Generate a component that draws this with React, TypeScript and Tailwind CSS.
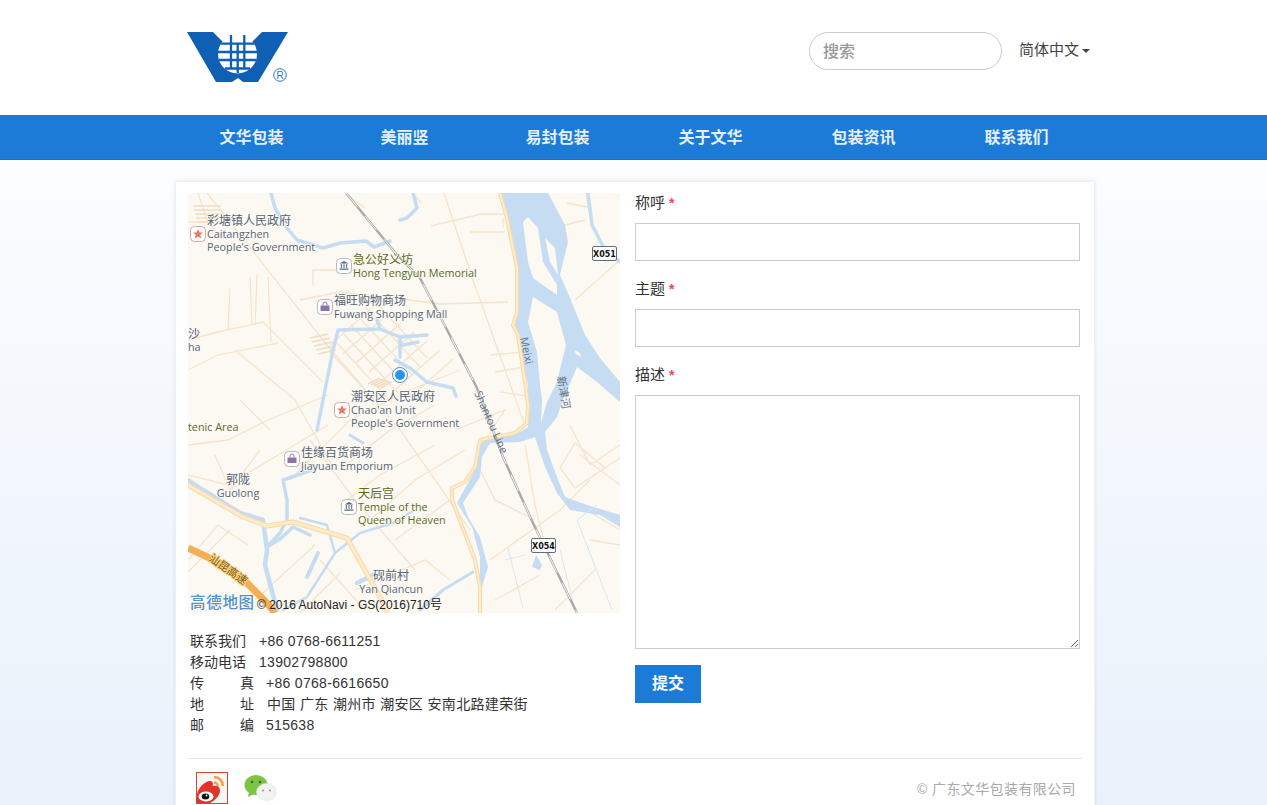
const cjk = '"Liberation Sans", "Noto Sans CJK SC", sans-serif';

const navItems = ['文华包装', '美丽竖', '易封包装', '关于文华', '包装资讯', '联系我们'];

function Logo() {
  return (
    <svg width="104" height="54" viewBox="0 0 104 54" className="block">
      <polygon points="0,0 26,0 36,10 65,10 75,0 101,0 71,50 56,50 51,46 45,50 29,50" fill="#0f5fb4" />
      <circle cx="50.500" cy="22" r="19.500" fill="#fff" />
      <g stroke="#0f5fb4" strokeWidth="2.300" fill="none">
        <path d="M34 11.700h33M31 20h39M32 28h37M38 36.500h25" />
        <path d="M44 3v34M57.300 3v34M50.700 12v29" />
      </g>
      <circle cx="93" cy="43" r="6.300" fill="none" stroke="#2d76c2" strokeWidth="1" />
      <text x="93" y="47" textAnchor="middle" fontSize="10" fill="#2d76c2" fontFamily="Liberation Sans, sans-serif">R</text>
    </svg>
  );
}

function Poi({ x, y, kind }: { x: number; y: number; kind: 'star' | 'bag' | 'museum' }) {
  return (
    <g>
      <rect x={x - 7.5} y={y - 7.5} width="15" height="15" rx="4" fill="#fff" stroke={kind === 'star' ? '#d9a79c' : '#b5b8bd'} />
      {kind === 'star' && (
        <polygon
          transform={`translate(${x} ${y})`}
          points="0,-5 1.5,-1.6 5,-1.5 2.3,0.8 3.2,4.4 0,2.4 -3.2,4.4 -2.3,0.8 -5,-1.5 -1.5,-1.6"
          fill="#e9776a"
        />
      )}
      {kind === 'bag' && (
        <g transform={`translate(${x} ${y})`}>
          <path d="M-4.5 -1.5h9v5.5h-9z" fill="#8c74a8" />
          <path d="M-2 -1.5v-1.5a2 2 0 0 1 4 0v1.5" fill="none" stroke="#8c74a8" />
        </g>
      )}
      {kind === 'museum' && (
        <g transform={`translate(${x} ${y})`} fill="#55677c">
          <path d="M0 -5l4.500 2.500h-9z" />
          <path d="M-3.200 -2h1v4h-1zM-0.500 -2h1v4h-1zM2.200 -2h1v4h-1zM-4.500 2.500h9v1.200h-9z" />
        </g>
      )}
    </g>
  );
}

function Shield({ x, y, label }: { x: number; y: number; label: string }) {
  return (
    <g>
      <rect x={x} y={y} width="24" height="14" rx="1.500" fill="#fff" stroke="#5c6f86" />
      <text x={x + 12} y={y + 10.5} textAnchor="middle" fontSize="8" fontWeight="700" fill="#111" fontFamily="DejaVu Sans, sans-serif">{label}</text>
    </g>
  );
}

function MapLabel({ x, y, lines, green, anchor }: { x: number; y: number; lines: string[]; green?: boolean; anchor?: 'middle' }) {
  return (
    <g fill={green ? '#5a6a1e' : '#566577'} textAnchor={anchor} stroke="#fcf9f2" strokeWidth="1.500" paintOrder="stroke">
      {lines.map((line, i) => (
        <text key={line} x={x} y={y + i * 13} fontSize={/^[\x00-\x7f]+$/.test(line) ? 10.8 : 12}>{line}</text>
      ))}
    </g>
  );
}

function MapPicture() {
  const thinRoads = [
    'M207 193L327 345L400 430L470 530',
    'M188 222h20l10 12M198 193l10 30M257 275l-2 50M268 277l3 65M250 277l2 48M230 288l-2 42',
    'M188 340l30 -8l45 -10l60 60M188 370l30 -15l60 -12M235 350l60 50l40 70M300 300l40 -8l55 6l45 6l68 -2',
    'M313 285v-15h55M345 193l20 15M413 193l8 10M444 193l30 90l50 140',
    'M431 226l50 -12h25M470 232h35M503 218v10M491 355l33 -3M495 372l30 -5M500 392l28 4',
    'M188 445l40 -5l40 -20l60 -25M188 475l40 10l50 -30l50 -30M215 455l15 35l30 -40M240 400l30 30',
    'M310 440l45 60l60 70M290 480l60 -60l60 -30l50 -20M340 470l50 -40l45 -25M340 505l40 -30l55 -30M370 520l45 -40l50 -30',
    'M188 560l30 -35l30 20M230 530l-45 45M255 600l60 -55M320 560l45 50M355 590l70 -30l25 20M395 540l55 -40M300 613l40 -40',
    'M455 430l50 -20l-20 30M475 460l20 40l40 20M490 560l70 -50l30 -30M495 600l45 -25M570 500l50 30',
    'M525 445l10 60l10 40M580 455l40 30M570 425l20 40l30 -20M586 193l6 35M565 225l20 -5M575 300l45 -40M567 203l25 5',
    'M555 610l40 -40M590 540l30 5M620 458l-45 30l-15 -20l15 -25l30 25',
  ];
  // city centre street grid
  const grid: string[] = [];
  [0, 1, 2, 3, 4, 5, 6].forEach((i) => {
    grid.push(`M${330 + i * 13} ${345 + i * 9}l45 -40`);
    grid.push(`M${330 + i * 7} ${352 - i * 9}l55 60`);
  });
  const hatch: string[] = [];
  [0, 1, 2, 3, 4].forEach((i) => {
    hatch.push(`M${310 + i * 2} ${338 + i * 4}l18 -4`);
    hatch.push(`M${368 + i * 3} ${384 + i}l12 -6`);
    hatch.push(`M${193 + i} ${206 + i * 4}h28`);
  });
  const waterLines: [string, number][] = [
    ['M271 193l4 15l12 20l10 12l26 8l17 -5l26 -2l8 6l16 -6', 3.500],
    ['M413 193l4 15l-10 10l-7 2', 3.500],
    ['M377 320l3 9l-42 1l-5 20l-10 50l-6 30', 3.500],
    ['M380 329l20 8l0 20M401 337l26 -2M403 345l15 -3M395 360l15 8l17 14l26 6l3 8', 3.500],
    ['M312 470l-29 10l4 20v20l-7 13l-13 14l13 -8l13 -12l17 8', 3.500],
    ['M188 480l15 10l37 23l23 7l4 30l-2 15l12 45', 4.500],
    ['M318 553l-11 24', 4],
    ['M300 518l27 7l8 28l-28 44l-24 13', 2.500],
    ['M335 553l25 -20l33 -10l20 -12', 2.500],
    ['M473 572l-30 18l-23 20', 3],
    ['M357 583l16 -8', 4.500],
    ['M350 435l13 8', 3],
    ['M588 193l4 32l13 25l15 12', 3.500],
  ];
  const mainRoad = 'M500 193L507 218L517 268L517 312L513 325L518 335L525 382L528 405L527 423L515 433L480 440L475 467L465 482L452 488L452 500L475 560L480 587L480 613';
  const sideRoad = 'M188 485L243 517L267 526L293 522L347 538L380 597L388 613';
  const rail = 'M346 193L397 255L420 278L443 322L477 388L503 457L533 523L577 613';
  return (
    <svg width="432" height="420" viewBox="188 193 432 420" className="block" fontFamily='"Open Sans", "Noto Sans CJK SC", sans-serif'>
      <rect x="188" y="193" width="432" height="420" fill="#fcf9f2" />
      {[...thinRoads, ...grid].map((d) => (
        <path key={d} d={d} fill="none" stroke="#f6e3cc" strokeWidth="1.300" />
      ))}
      {hatch.map((d) => (
        <path key={d} d={d} fill="none" stroke="#f3dcc0" strokeWidth="1.500" />
      ))}
      <polygon
        points="501,193 507,218 515,265 518,302 515,328 522,358 528,385 528,427 515,435 490,437 478,445 475,470 457,503 472,527 480,557 480,587 482,587 488,567 480,537 468,517 463,503 480,477 482,457 490,443 520,442 535,437 545,467 557,493 570,510 600,515 620,527 620,515 587,505 565,497 557,477 547,450 545,432 557,417 563,400 577,367 597,382 620,402 620,382 600,358 585,335 570,298 560,275 568,242 565,225 548,193"
        fill="#c5dcf2"
      />
      <polygon points="523,222 528,217 538,228 543,262 557,285 557,295 533,278 528,262" fill="#fcf9f2" />
      <polygon points="545,238 555,248 558,275 550,262" fill="#fcf9f2" />
      <polygon points="533,297 557,312 566,345 561,365 557,382 547,402 541,423 542,400 540,385 537,352 528,322" fill="#fcf9f2" />
      <polygon points="574,350 580,353 581,357 576,354" fill="#fcf9f2" />
      <path d="M536 555l6 10l-2 5l-8 -3z" fill="#c5dcf2" />
      <path d="M577 520l20 -15M577 520l35 90M560 550l15 60M505 560l20 -5M508 548l15 60" fill="none" stroke="#d9e6f2" strokeWidth="1" />
      {waterLines.map(([d, w]) => (
        <path key={d} d={d} fill="none" stroke="#c5dcf2" strokeWidth={w} strokeLinejoin="round" strokeLinecap="round" />
      ))}
      <path d={mainRoad} fill="none" stroke="#f8d9a4" strokeWidth="4" strokeLinejoin="round" />
      <path d={mainRoad} fill="none" stroke="#fdeccb" strokeWidth="2" strokeLinejoin="round" />
      <path d={sideRoad} fill="none" stroke="#f8d9a4" strokeWidth="5" strokeLinejoin="round" />
      <path d={sideRoad} fill="none" stroke="#fdeccb" strokeWidth="3" strokeLinejoin="round" />
      <path d="M188 548L220 563L247 583L267 603L275 613" fill="none" stroke="#f4ae58" strokeWidth="7" />
      <path d={rail} fill="none" stroke="#a9a9a9" strokeWidth="2.400" />
      <path d={rail} fill="none" stroke="#fff" strokeWidth="0.900" strokeDasharray="18 12" />

      <MapLabel x={207} y={225} lines={['彩塘镇人民政府', 'Caitangzhen', "People's Government"]} />
      <MapLabel x={353} y={264} green lines={['急公好义坊', 'Hong Tengyun Memorial']} />
      <MapLabel x={334} y={305} lines={['福旺购物商场', 'Fuwang Shopping Mall']} />
      <MapLabel x={188} y={338} lines={['沙', 'ha']} />
      <MapLabel x={351} y={401} lines={['潮安区人民政府', "Chao'an Unit", "People's Government"]} />
      <MapLabel x={188} y={431} green lines={['tenic Area']} />
      <MapLabel x={301} y={457} lines={['佳缘百货商场', 'Jiayuan Emporium']} />
      <MapLabel x={238} y={484} anchor="middle" lines={['郭陇', 'Guolong']} />
      <MapLabel x={358} y={498} green lines={['天后宫', 'Temple of the', 'Queen of Heaven']} />
      <MapLabel x={391} y={580} anchor="middle" lines={['砚前村', 'Yan Qiancun']} />

      <g fill="#5f7389" fontSize="11">
        <text transform="translate(520 338) rotate(78)">Meixi</text>
        <text transform="translate(474 393) rotate(66)">Shantou Line</text>
        <text transform="translate(557 377) rotate(80)" fontSize="11">新津河</text>
      </g>
      <text transform="translate(208 560) rotate(35)" fontSize="11" fill="#7a5a20" stroke="#fbd27c" strokeWidth="2" paintOrder="stroke">汕昆高速</text>

      <Poi x={198} y={234} kind="star" />
      <Poi x={344} y={266} kind="museum" />
      <Poi x={325} y={307} kind="bag" />
      <Poi x={342} y={410} kind="star" />
      <Poi x={292} y={459} kind="bag" />
      <Poi x={349} y={507} kind="museum" />
      <Shield x={592.5} y={246.5} label="X051" />
      <Shield x={531.5} y={538.5} label="X054" />

      <circle cx="400" cy="375" r="7.500" fill="#fff" stroke="#3a9bf0" strokeWidth="1" />
      <circle cx="400" cy="375" r="5" fill="#2a94f4" />

      <text x="190" y="608" fontSize="15.500" fontWeight="500" fill="#4f93cf" letterSpacing="0.700" fontFamily='"Noto Sans CJK SC", sans-serif'>高德地图</text>
      <text x="257" y="609" fontSize="12" fill="#222" fontFamily='"Liberation Sans", "Noto Sans CJK SC", sans-serif'>© 2016 AutoNavi - GS(2016)710号</text>
    </svg>
  );
}

function WeiboIcon() {
  return (
    <svg width="32" height="32" viewBox="0 0 32 32" className="block">
      <rect x="0.500" y="0.500" width="31" height="31" fill="#fdf6f2" stroke="#c9473d" />
      <path d="M18 5a9 9 0 0 1 9 9" fill="none" stroke="#f2a23c" strokeWidth="2.600" />
      <path d="M18 10.500a3.800 3.800 0 0 1 3.800 3.800" fill="none" stroke="#f2a23c" strokeWidth="2.400" />
      <path d="M1 31v-9c1-6 8-13 13-13c3 0 3.500 3 2.500 5c4-1 7.500 0 7.500 4.500c0 5-5 10-10 12.500z" fill="#e3322b" />
      <ellipse cx="10" cy="24.500" rx="7.500" ry="5" fill="#fff" />
      <ellipse cx="9.500" cy="24.500" rx="3.800" ry="3" fill="#111" />
      <circle cx="10.500" cy="23.500" r="0.900" fill="#fff" />
    </svg>
  );
}

function WechatIcon() {
  return (
    <svg width="34" height="30" viewBox="0 0 34 30" className="block">
      <ellipse cx="12" cy="10" rx="11.500" ry="10" fill="#7cc243" />
      <path d="M5 17l-1 5l6 -3z" fill="#7cc243" />
      <circle cx="8" cy="7" r="1.300" fill="#3f6d1f" />
      <circle cx="16" cy="7" r="1.300" fill="#3f6d1f" />
      <ellipse cx="22.500" cy="17" rx="10" ry="8.500" fill="#f1f2f2" stroke="#dfe2e2" strokeWidth="0.600" />
      <path d="M27 23l3 4l-.5 -6z" fill="#f1f2f2" />
      <circle cx="19" cy="15.500" r="1.100" fill="#9aa0a3" />
      <circle cx="26" cy="15.500" r="1.100" fill="#9aa0a3" />
    </svg>
  );
}

function Field({ label, children }: { label: string; children: React.ReactNode }) {
  return (
    <div>
      <div className="flex h-[20px] items-center text-[15px] leading-[20px] text-[#333]">
        {label}
        <span className="ml-1 h-[20px] text-[14px] leading-[20px] font-bold text-[#f0436a]">*</span>
      </div>
      <div className="mt-[10px]">{children}</div>
    </div>
  );
}

export default function App() {
  return (
    <div
      className="h-[805px] overflow-hidden bg-gradient-to-b from-white to-[#e9f1fb]"
      style={{ fontFamily: cjk }}
    >
      {/* header */}
      <header className="h-[115px] bg-white">
        <div className="ml-[175px] flex w-[918px] items-start justify-between pl-[12px]">
          <div className="pt-[32px]">
            <Logo />
          </div>
          <div className="flex items-center pt-[32px] pr-[3px]">
            <input
              placeholder="搜索"
              className="h-[38px] w-[193px] rounded-full border border-[#ccc] bg-white px-[13px] pt-[1px] text-[16px] font-medium outline-none placeholder:text-[#999]"
            />
            <span className="ml-[17px] -mt-[2px] text-[15px] text-[#444]">简体中文</span>
            <span className="ml-[3px] h-0 w-0 border-x-[4px] border-t-[4px] border-x-transparent border-t-[#444]" />
          </div>
        </div>
      </header>

      {/* nav */}
      <nav className="h-[45px] border-b border-[#1a6fc2] bg-[#1c7bd6]">
        <ul className="ml-[175px] flex">
          {navItems.map((item) => (
            <li key={item} className="w-[153px] pt-[1px] text-center text-[16px] leading-[44px] font-bold text-[#e4effa]">
              {item}
            </li>
          ))}
        </ul>
      </nav>

      {/* card */}
      <main className="mt-[21px] ml-[175px] w-[920px] border border-[#eef0f3] bg-white px-[12px] pt-[11px] pb-[20px] shadow-[0_0_4px_rgba(0,0,0,0.08)]">
        <div className="flex h-[565px] gap-[15px]">
          <div className="w-[432px]">
            <MapPicture />
            <div className="mt-[18px] pl-[2px] text-[14px] leading-[21px] text-[#333]">
              <div className="flex"><span className="w-[69px]">联系我们</span><span className="tracking-[0.3px]">+86 0768-6611251</span></div>
              <div className="flex"><span className="w-[69px]">移动电话</span><span className="tracking-[0.3px]">13902798800</span></div>
              <div className="flex"><span className="flex w-[64px] justify-between"><span>传</span><span>真</span></span><span className="ml-[12px] tracking-[0.3px]">+86 0768-6616650</span></div>
              <div className="flex"><span className="flex w-[64px] justify-between"><span>地</span><span>址</span></span><span className="ml-[13px] tracking-[0.35px]">中国 广东 潮州市 潮安区 安南北路建荣街</span></div>
              <div className="flex"><span className="flex w-[64px] justify-between"><span>邮</span><span>编</span></span><span className="ml-[12px] tracking-[0.3px]">515638</span></div>
            </div>
          </div>

          <form className="w-[445px]">
            <Field label="称呼">
              <input className="block h-[38px] w-full border border-[#ccc] bg-white" />
            </Field>
            <div className="mt-[18px]">
              <Field label="主题">
                <input className="block h-[38px] w-full border border-[#ccc] bg-white" />
              </Field>
            </div>
            <div className="mt-[18px]">
              <Field label="描述">
                <textarea className="block h-[254px] w-full border border-[#ccc] bg-white" />
              </Field>
            </div>
            <button type="button" className="mt-[16px] h-[38px] w-[66px] bg-[#1c7bd6] text-[16px] font-bold text-white">
              提交
            </button>
          </form>
        </div>

        <footer className="flex w-[894px] items-start justify-between border-t border-[#e5e5e5] pt-[13px] pl-[8px]">
          <div className="flex gap-[16px]">
            <WeiboIcon />
            <div className="pt-[3px]">
              <WechatIcon />
            </div>
          </div>
          <span className="pt-[7px] pr-[6px] text-[14px] leading-[20px] tracking-[0.4px] text-[#aaa]">© 广东文华包装有限公司</span>
        </footer>
      </main>
    </div>
  );
}
